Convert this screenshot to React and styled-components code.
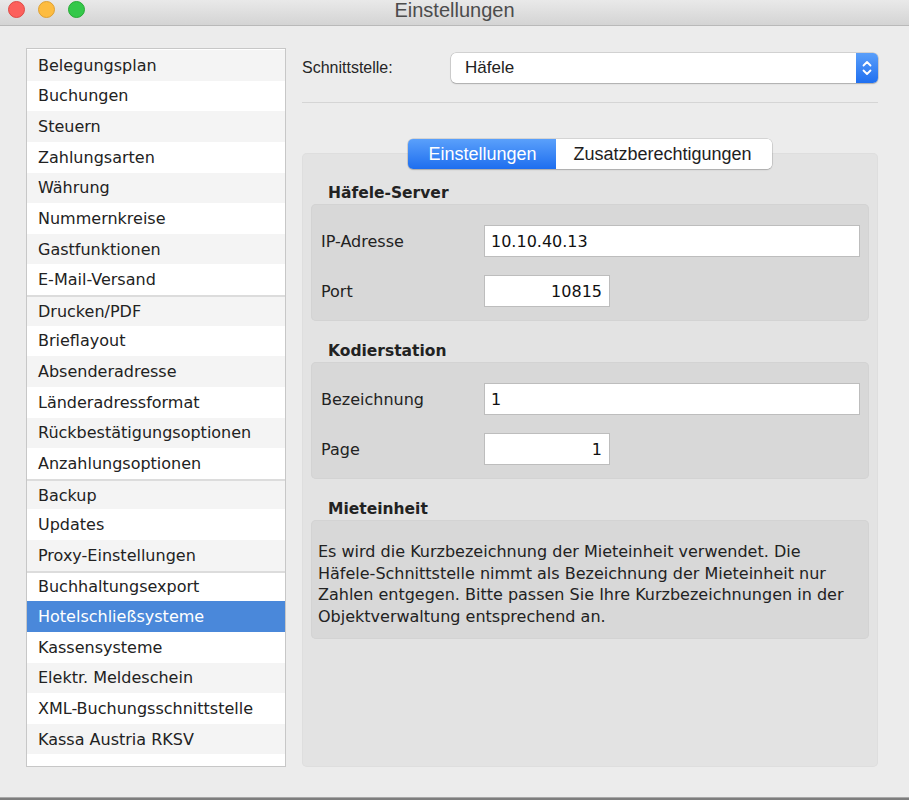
import styled, { createGlobalStyle } from 'styled-components';

const GlobalStyle = createGlobalStyle`
	html, body {
		margin: 0;
		padding: 0;
		background: #7d7d7d;
	}
	* {
		box-sizing: border-box;
	}
`;

const menuGroups = [
	['Belegungsplan', 'Buchungen', 'Steuern', 'Zahlungsarten', 'Währung', 'Nummernkreise', 'Gastfunktionen', 'E-Mail-Versand'],
	['Drucken/PDF', 'Brieflayout', 'Absenderadresse', 'Länderadressformat', 'Rückbestätigungsoptionen', 'Anzahlungsoptionen'],
	['Backup', 'Updates', 'Proxy-Einstellungen'],
	['Buchhaltungsexport', 'Hotelschließsysteme', 'Kassensysteme', 'Elektr. Meldeschein', 'XML-Buchungsschnittstelle', 'Kassa Austria RKSV'],
];

const SELECTED = 'Hotelschließsysteme';

const StepperIcon = () => (
	<svg width='12' height='18' viewBox='0 0 12 18' fill='none' stroke='#fff' strokeWidth='1.8' strokeLinecap='round' strokeLinejoin='round'>
		<path d='M2.5 6.5 L6 3 L9.5 6.5' />
		<path d='M2.5 11.5 L6 15 L9.5 11.5' />
	</svg>
);

export default function App() {
	let index = 0;

	return (
		<>
			<GlobalStyle />
			<StyledWindow>
				<StyledTitleBar>
					<div className='lights'>
						<Light color='#fc605c' border='#de4a45' />
						<Light color='#fdbc40' border='#dea033' />
						<Light color='#34c84a' border='#27aa35' />
					</div>
					<span className='title'>Einstellungen</span>
				</StyledTitleBar>

				<StyledBody>
					<StyledSidebar>
						{menuGroups.map((group, g) =>
							group.map((item, i) => {
								index += 1;
								return (
									<MenuRow
										key={item}
										$odd={index % 2 === 1}
										$selected={item === SELECTED}
										$groupStart={g > 0 && i === 0}
									>
										{item}
									</MenuRow>
								);
							})
						)}
					</StyledSidebar>

					<StyledMain>
						<StyledInterfaceRow>
							<label>Schnittstelle:</label>
							<StyledSelect>
								<span>Häfele</span>
								<div className='stepper'>
									<StepperIcon />
								</div>
							</StyledSelect>
						</StyledInterfaceRow>
						<Divider />

						<StyledTabs>
							<Tab $active>Einstellungen</Tab>
							<Tab>Zusatzberechtigungen</Tab>
						</StyledTabs>

						<StyledTabPanel>
							<SectionTitle>Häfele-Server</SectionTitle>
							<GroupBox>
								<FieldLabel>IP-Adresse</FieldLabel>
								<TextField>10.10.40.13</TextField>
								<FieldLabel>Port</FieldLabel>
								<TextField $short $right>10815</TextField>
							</GroupBox>

							<SectionTitle>Kodierstation</SectionTitle>
							<GroupBox>
								<FieldLabel>Bezeichnung</FieldLabel>
								<TextField>1</TextField>
								<FieldLabel>Page</FieldLabel>
								<TextField $short $right>1</TextField>
							</GroupBox>

							<SectionTitle>Mieteinheit</SectionTitle>
							<NoteBox>
								Es wird die Kurzbezeichnung der Mieteinheit verwendet. Die Häfele-Schnittstelle nimmt als
								Bezeichnung der Mieteinheit nur Zahlen entgegen. Bitte passen Sie Ihre Kurzbezeichnungen in
								der Objektverwaltung entsprechend an.
							</NoteBox>
						</StyledTabPanel>
					</StyledMain>
				</StyledBody>
			</StyledWindow>
		</>
	);
}

const StyledWindow = styled.div`
	width: 909px;
	height: 798px;
	display: flex;
	flex-direction: column;
	background: #ececec;
	border-bottom: 1px solid #a8a8a8;
	font-family: 'DejaVu Sans', sans-serif;
	color: #222;
`;

const StyledTitleBar = styled.div`
	position: relative;
	height: 26px;
	flex: none;
	display: flex;
	align-items: center;
	justify-content: center;
	background: linear-gradient(#e9e9e9, #d4d4d4);
	border-bottom: 1px solid #b9b9b9;

	.lights {
		position: absolute;
		left: 8px;
		top: 1px;
		display: flex;
		gap: 13px;
	}

	.title {
		font-family: 'Liberation Sans', Arial, sans-serif;
		font-size: 20px;
		color: #4c4c4c;
		margin-top: -5px;
	}
`;

const Light = styled.span`
	width: 17px;
	height: 17px;
	border-radius: 50%;
	background: ${(p) => p.color};
	border: 1px solid ${(p) => p.border};
`;

const StyledBody = styled.div`
	flex: 1;
	display: flex;
	gap: 16px;
	padding: 22px 31px 30px 26px;
`;

const StyledSidebar = styled.div`
	width: 260px;
	flex: none;
	background: #fff;
	border: 1px solid #c7c7c7;
	padding-top: 1px;
`;

const MenuRow = styled.div`
	height: 30.64px;
	display: flex;
	align-items: center;
	padding-left: 11px;
	font-size: 16px;
	white-space: nowrap;
	background: ${(p) => (p.$selected ? '#4a88da' : p.$odd ? '#f4f4f4' : '#fff')};
	color: ${(p) => (p.$selected ? '#fff' : '#222')};
	border-top: ${(p) => (p.$groupStart ? '2px solid #dcdcdc' : 'none')};
`;

const StyledMain = styled.div`
	flex: 1;
	display: flex;
	flex-direction: column;
`;

const StyledInterfaceRow = styled.div`
	display: flex;
	align-items: center;
	margin-top: 5px;
	height: 30px;

	label {
		width: 149px;
		font-family: 'Liberation Sans', Arial, sans-serif;
		font-size: 16px;
		color: #262626;
	}
`;

const StyledSelect = styled.div`
	flex: 1;
	height: 30px;
	display: flex;
	align-items: center;
	justify-content: space-between;
	background: #fff;
	border-radius: 5px;
	box-shadow: 0 0 0 0.5px rgba(0, 0, 0, 0.22), 0 1px 1.5px rgba(0, 0, 0, 0.18);
	overflow: hidden;

	span {
		padding-left: 14px;
		font-family: 'Liberation Sans', Arial, sans-serif;
		font-size: 17px;
		color: #222;
	}

	.stepper {
		width: 22px;
		height: 100%;
		display: flex;
		align-items: center;
		justify-content: center;
		background: linear-gradient(#5a9ffa, #1f6ff0);
	}
`;

const Divider = styled.div`
	height: 1px;
	margin-top: 19px;
	background: #d5d5d5;
`;

const StyledTabs = styled.div`
	position: relative;
	z-index: 1;
	align-self: center;
	display: flex;
	margin-top: 36px;
	margin-bottom: -16px;
	border-radius: 5px;
	box-shadow: 0 0 0 0.5px rgba(0, 0, 0, 0.2), 0 1px 1.5px rgba(0, 0, 0, 0.16);
	overflow: hidden;
`;

const Tab = styled.div`
	height: 30px;
	display: flex;
	align-items: center;
	padding: ${(p) => (p.$active ? '0 20px 0 20px' : '0 20px 0 17px')};
	font-family: 'Liberation Sans', Arial, sans-serif;
	font-size: 18px;
	background: ${(p) => (p.$active ? 'linear-gradient(#5aa0fb, #1e6eef)' : '#fff')};
	color: ${(p) => (p.$active ? '#fff' : '#1e1e1e')};
`;

const StyledTabPanel = styled.div`
	flex: 1;
	display: flex;
	flex-direction: column;
	padding: 30px 9px 0 9px;
	background: #e3e3e3;
	border-radius: 5px;
	box-shadow: inset 0 0 0 1px #dedede;
`;

const SectionTitle = styled.div`
	height: 20px;
	line-height: 20px;
	padding-left: 17px;
	margin-bottom: 1px;
	font-size: 15.5px;
	font-weight: bold;
	color: #222;

	& + * + & {
		margin-top: 20px;
	}
`;

const GroupBox = styled.div`
	display: grid;
	grid-template-columns: 163px 1fr;
	align-items: center;
	row-gap: 18px;
	padding: 21px 9px 14px 10px;
	background: #d8d8d8;
	border-radius: 5px;
	box-shadow: inset 0 0 0 1px #d3d3d3;
`;

const FieldLabel = styled.div`
	font-size: 16px;
	color: #222;
`;

const TextField = styled.div`
	height: 32px;
	width: ${(p) => (p.$short ? '126px' : '100%')};
	display: flex;
	align-items: center;
	justify-content: ${(p) => (p.$right ? 'flex-end' : 'flex-start')};
	padding: 0 7px 0 6px;
	background: #fff;
	border: 1px solid #bdbdbd;
	font-size: 16px;
	color: #111;
`;

const NoteBox = styled.div`
	padding: 21px 12px 12px 7px;
	background: #d8d8d8;
	border-radius: 5px;
	box-shadow: inset 0 0 0 1px #d3d3d3;
	font-size: 16px;
	line-height: 21.5px;
	color: #222;
`;
